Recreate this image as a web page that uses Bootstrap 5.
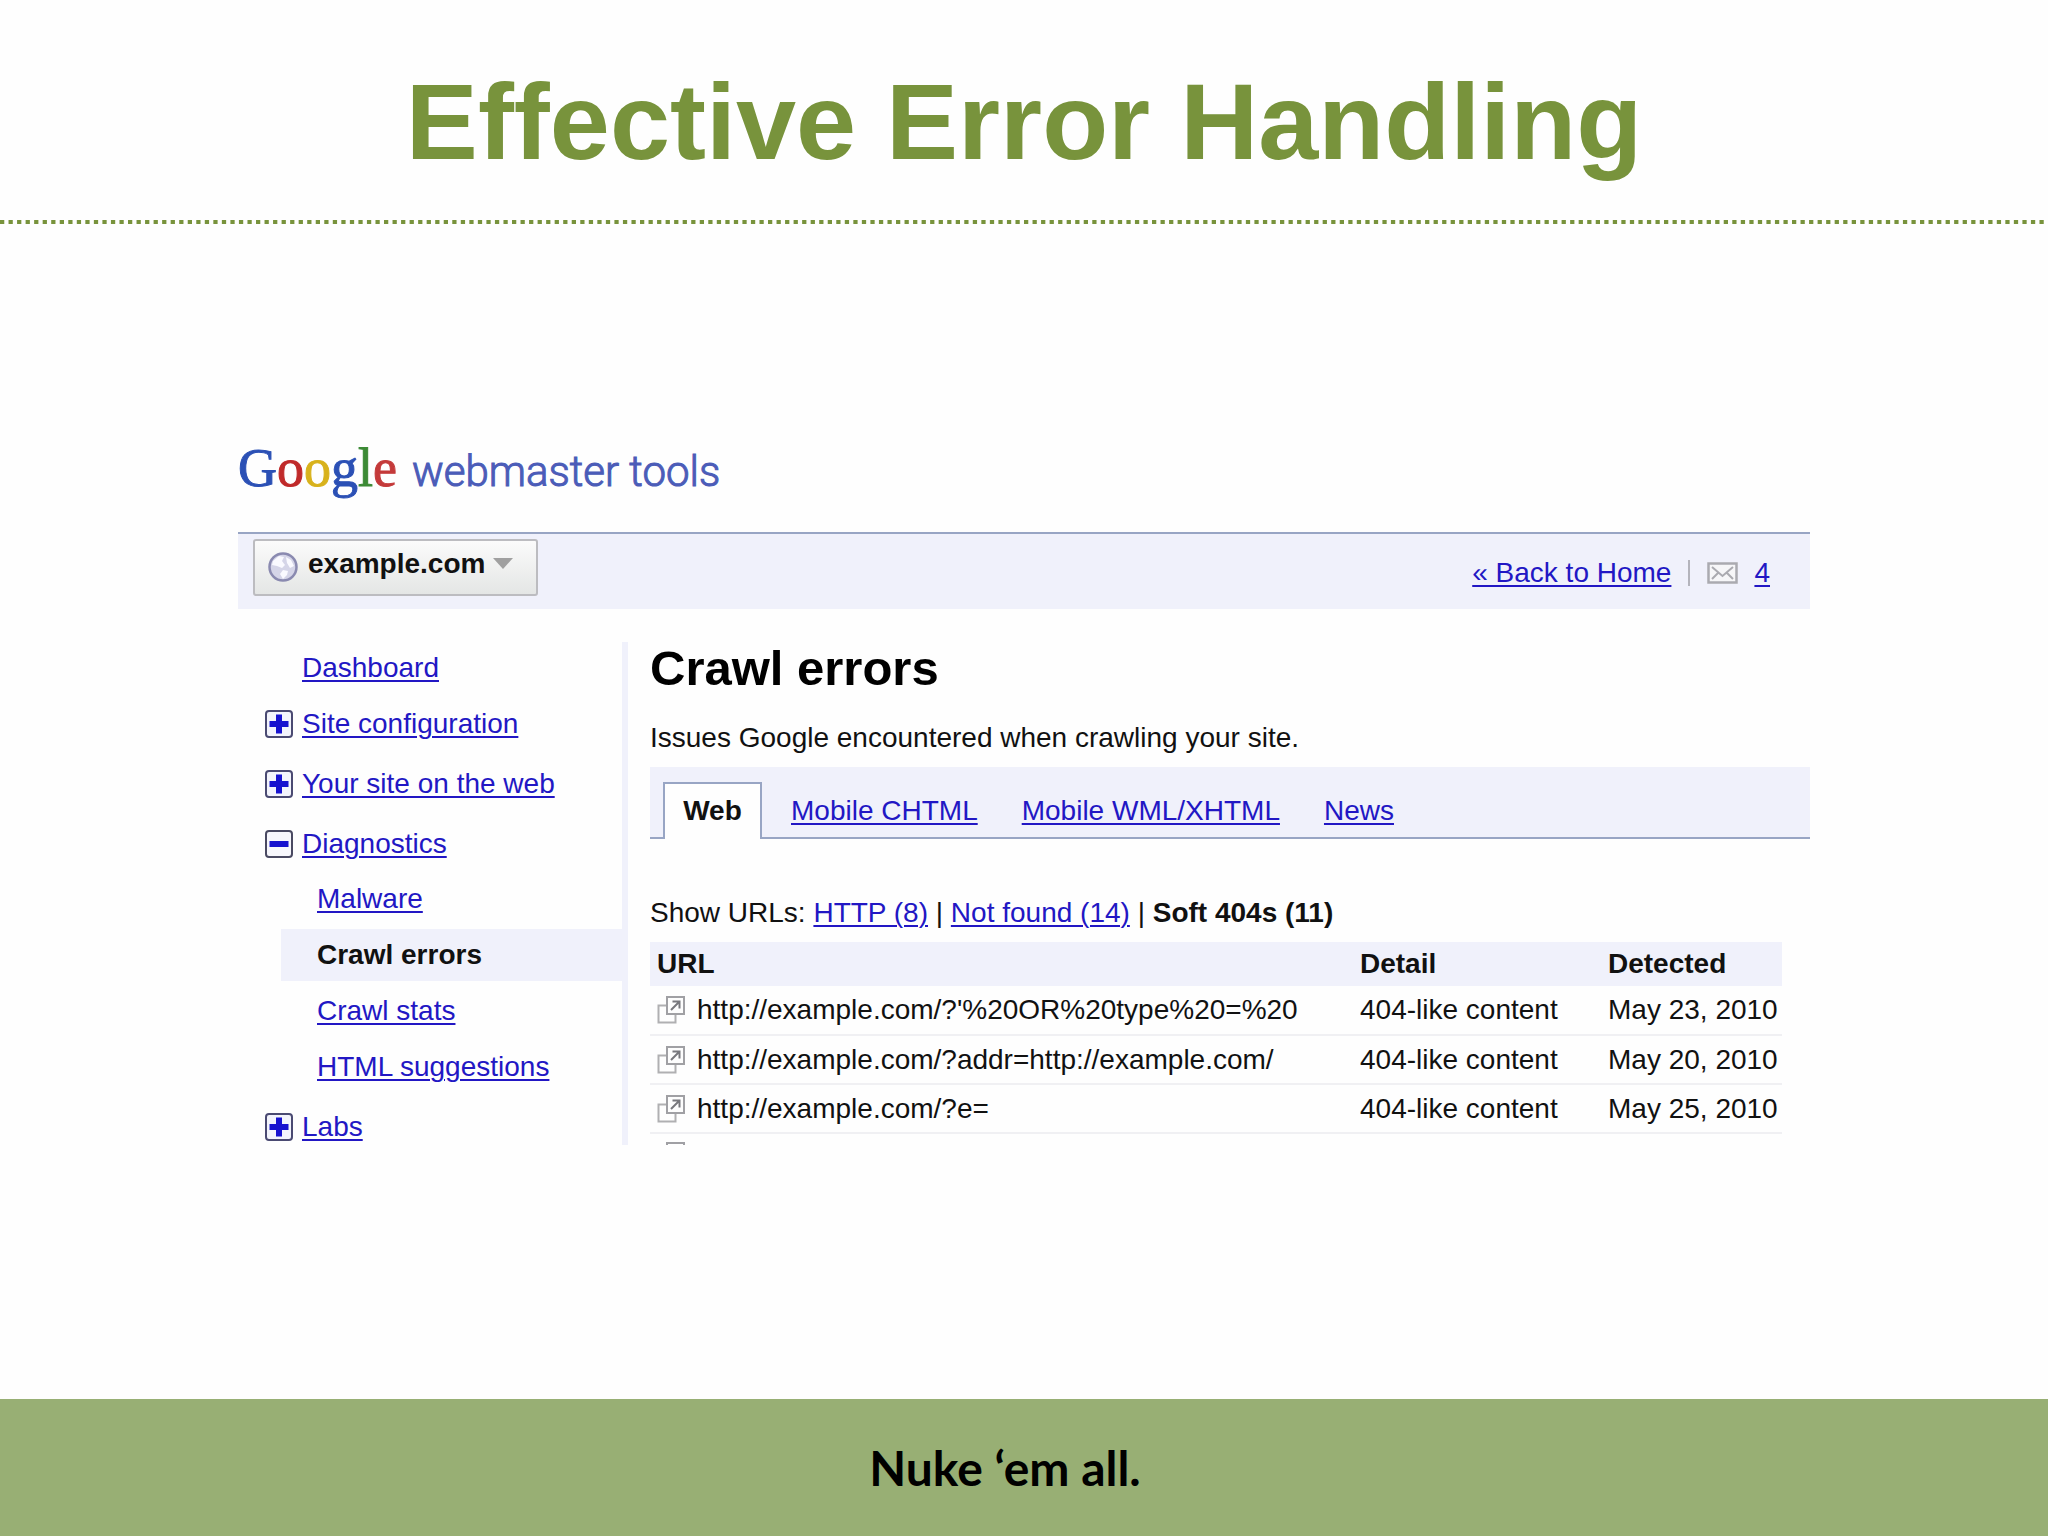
<!DOCTYPE html>
<html lang="en">
<head>
<meta charset="utf-8">
<meta name="viewport" content="width=device-width, initial-scale=1">
<title>Effective Error Handling</title>
<link href="https://cdn.jsdelivr.net/npm/bootstrap@5.3.0/dist/css/bootstrap.min.css" rel="stylesheet">
<style>
  :root { --leaf: #78933c; --panel: #f0f1fb; --rule: #98a5c4; --link: #2217c4; }
  body { font-family: "Liberation Sans", Arial, sans-serif; font-size: 28px; line-height: 34px; color: #111; background: #fefefe; }
  a { color: var(--link); text-decoration-thickness: 2px; text-underline-offset: 3px; }
  .slide-head { height: 220px; padding-top: 24px; }
  .slide-title { font-size: 108px; line-height: 120px; color: var(--leaf); }
  .dots { height: 4px; width: 100%; }
  .slide-body { padding: 214px 24px 0; }
  .tool { max-width: 1572px; }
  .brand { line-height: 60px; margin-bottom: 30px; }
  .brand-g { font-family: "Liberation Serif", serif; font-size: 54px; -webkit-text-stroke: 1px; }
  .brand-name { font-family: Roboto, sans-serif; font-weight: 300; font-size: 42px; color: #4b5cb8; margin-left: 15px; -webkit-text-stroke: 1px; }
  .site-bar { background: var(--panel); border-top: 2px solid var(--rule); height: 77px; padding: 5px 40px 0 15px; margin-bottom: 33px; }
  .site-pick { height: 57px; width: 285px; padding: 0 0 8px 13px; border: 2px solid #bcbcc0; border-radius: 3px; background: linear-gradient(#fbfbfb, #e4e6e5); font-weight: 700; color: #111; text-align: left; }
  .site-pick svg:first-child { margin: 6px 2px 0 0; }
  .bar-links { height: 68px; }
  .bar-sep { width: 2px; height: 26px; background: #b4b4bc; margin: 0 17px; }
  .side { flex: 0 0 390px; border-right: 6px solid var(--panel); padding-left: 27px; }
  .side-row { height: 60px; gap: 9px; }
  .side-first { height: 52px; padding-left: 37px; }
  .side-last { height: 36px; }
  .side-sub { margin: -3px 0 14px 16px; }
  .side-sub li { height: 52px; margin: 2px 0; padding-left: 36px; }
  .side-sub .here { background: var(--panel); font-weight: 700; }
  .twist { width: 28px; height: 28px; padding: 0; border: 0; background: none; }
  .report { padding-left: 22px; min-width: 0; }
  .report h2 { font-size: 49px; line-height: 52px; margin-bottom: 27px; color: #000; }
  .report-note { margin-bottom: 12px; }
  .report-tabs { background: var(--panel); border-bottom: 2px solid var(--rule); height: 72px; padding-left: 13px; margin-bottom: 57px; }
  .report-tabs .nav-link { height: 57px; padding: 0; border-radius: 0; border: 0; text-decoration: underline; color: var(--link); line-height: 57px; margin-bottom: -2px; }
  .report-tabs .nav-link.active { width: 99px; border: 2px solid var(--rule); border-bottom: 0; text-align: center; text-decoration: none; font-weight: 700; color: #111; background: #fefefe; margin-right: 29px; line-height: 53px; }
  .report-tabs .nav-link + .nav-link { margin-right: 44px; }
  .filters { margin-bottom: 12px; }
  .urls { width: calc(100% - 28px); margin: 0; table-layout: fixed; }
  .urls th, .urls td { padding: 0 0 0 7px; vertical-align: middle; white-space: nowrap; }
  .urls th { height: 44px; background: var(--panel); }
  .urls td { height: 49px; border-bottom: 2px solid #f0f0f3; }
  .urls .peek td { height: 12px; border: 0; line-height: 0; vertical-align: bottom; }
  .c-detail { width: 248px; } .c-date { width: 181px; }
  .urls svg { display: block; }
  .url-cell { gap: 12px; }
  .slide-foot { height: 137px; background: #98af74; font-family: Lato, sans-serif; font-weight: 700; font-size: 48px; line-height: 56px; color: #000; padding-right: 38px; padding-top: 1px; }
</style>
</head>
<body class="d-flex flex-column min-vh-100">
<svg class="d-none" aria-hidden="true">
  <symbol id="i-plus" viewBox="0 0 28 28"><rect x="1" y="1" width="26" height="26" rx="3" fill="#f3f4fc" stroke="#4a4a72" stroke-width="2"/><path d="M11 4.500h6v6.500h6.500v6h-6.500v6.500h-6v-6.500H4.500v-6H11z" fill="#1712cf"/></symbol>
  <symbol id="i-minus" viewBox="0 0 28 28"><rect x="1" y="1" width="26" height="26" rx="3" fill="#f7f7fc" stroke="#4a4a62" stroke-width="2"/><path d="M4.500 11h19v6h-19z" fill="#1712cf"/></symbol>
  <symbol id="i-open" viewBox="0 0 28 28"><path d="M9 9.500H1.500v17h17V19" fill="none" stroke="#b0b0b2" stroke-width="2"/><rect x="10" y="1" width="17" height="17" fill="#fdfdfd" stroke="#a0a0a4" stroke-width="2"/><path d="M14 14L22 6M15.500 5.500H22.500V12.500" fill="none" stroke="#77777c" stroke-width="2"/></symbol>
</svg>

<header class="slide-head d-flex align-items-center justify-content-center">
  <h1 class="slide-title fw-bold m-0 text-center">Effective Error Handling</h1>
</header>
<svg class="dots d-block" aria-hidden="true"><line x1="0" y1="2" x2="100%" y2="2" pathLength="480" stroke="#78933c" stroke-width="4" stroke-dasharray="1 1"/></svg>

<main class="slide-body flex-grow-1">
  <div class="tool mx-auto">
    <div class="brand d-flex align-items-baseline">
      <span class="brand-g"><span style="color:#2b50b5">G</span><span style="color:#c02a2a">o</span><span style="color:#d8b21c">o</span><span style="color:#2b50b5">g</span><span style="color:#3c8a35">l</span><span style="color:#c43a3a">e</span></span>
      <span class="brand-name">webmaster tools</span>
    </div>

    <div class="site-bar d-flex justify-content-between">
      <button type="button" class="site-pick d-flex align-items-center">
        <svg width="30" height="30" viewBox="0 0 30 30" aria-hidden="true"><circle cx="15" cy="15" r="13.500" fill="#d5d5e8" stroke="#8a8ab0" stroke-width="2.500"/><path d="M5 9l6-5 5 1-2 4 3 4-3 3-5-2-5-1zM18 5l5 3 3 6-4 2-3-5zM15 18l5 1-1 4-4 4-3-5z" fill="#fafaff"/></svg>
        <span class="ms-2">example.com</span>
        <svg class="ms-2" width="20" height="12" viewBox="0 0 20 12" aria-hidden="true"><path d="M0 0h20L10 11z" fill="#a0a0a0"/></svg>
      </button>
      <div class="bar-links d-flex align-items-center">
        <a href="#">« Back to Home</a>
        <span class="bar-sep"></span>
        <svg width="31" height="22" viewBox="0 0 31 22" aria-hidden="true"><rect x="1.500" y="1.500" width="28" height="19" fill="#f6f6f8" stroke="#aaaab0" stroke-width="2.500"/><path d="M5 5l10.500 9L26 5M5 17l6-6M26 17l-6-6" fill="none" stroke="#aaaab0" stroke-width="2"/></svg>
        <a href="#" class="ms-3">4</a>
      </div>
    </div>

    <div class="d-flex">
      <nav class="side" aria-label="Site">
        <div class="side-first d-flex align-items-center"><a href="#">Dashboard</a></div>
        <div class="side-row d-flex align-items-center"><button class="twist d-flex" type="button" aria-label="Expand"><svg width="28" height="28"><use href="#i-plus"/></svg></button><a href="#">Site configuration</a></div>
        <div class="side-row d-flex align-items-center"><button class="twist d-flex" type="button" aria-label="Expand"><svg width="28" height="28"><use href="#i-plus"/></svg></button><a href="#">Your site on the web</a></div>
        <div class="side-row d-flex align-items-center"><button class="twist d-flex" type="button" aria-label="Collapse"><svg width="28" height="28"><use href="#i-minus"/></svg></button><a href="#">Diagnostics</a></div>
        <ul class="side-sub list-unstyled d-flex flex-column">
          <li class="d-flex align-items-center"><a href="#">Malware</a></li>
          <li class="here d-flex align-items-center">Crawl errors</li>
          <li class="d-flex align-items-center"><a href="#">Crawl stats</a></li>
          <li class="d-flex align-items-center"><a href="#">HTML suggestions</a></li>
        </ul>
        <div class="side-row side-last d-flex align-items-center"><button class="twist d-flex" type="button" aria-label="Expand"><svg width="28" height="28"><use href="#i-plus"/></svg></button><a href="#">Labs</a></div>
      </nav>

      <section class="report flex-grow-1">
        <h2 class="fw-bold">Crawl errors</h2>
        <p class="report-note">Issues Google encountered when crawling your site.</p>
        <nav class="report-tabs nav align-items-end" aria-label="Crawl type">
          <a class="nav-link active" href="#">Web</a>
          <a class="nav-link" href="#">Mobile CHTML</a>
          <a class="nav-link" href="#">Mobile WML/XHTML</a>
          <a class="nav-link" href="#">News</a>
        </nav>
        <p class="filters">Show URLs: <a href="#">HTTP (8)</a> | <a href="#">Not found (14)</a> | <b>Soft 404s (11)</b></p>
        <table class="urls">
          <colgroup><col><col class="c-detail"><col class="c-date"></colgroup>
          <thead><tr><th scope="col">URL</th><th scope="col">Detail</th><th scope="col">Detected</th></tr></thead>
          <tbody>
            <tr><td><div class="url-cell d-flex align-items-center"><svg width="28" height="28"><use href="#i-open"/></svg>http://example.com/?'%20OR%20type%20=%20</div></td><td>404-like content</td><td>May 23, 2010</td></tr>
            <tr><td><div class="url-cell d-flex align-items-center"><svg width="28" height="28"><use href="#i-open"/></svg>http://example.com/?addr=http://example.com/</div></td><td>404-like content</td><td>May 20, 2010</td></tr>
            <tr><td><div class="url-cell d-flex align-items-center"><svg width="28" height="28"><use href="#i-open"/></svg>http://example.com/?e=</div></td><td>404-like content</td><td>May 25, 2010</td></tr>
            <tr class="peek"><td colspan="3"><svg class="ms-0 mt-auto" width="28" height="3" viewBox="0 0 28 3"><path d="M10 3V1h17v2" fill="none" stroke="#a0a0a4" stroke-width="2"/></svg></td></tr>
          </tbody>
        </table>
      </section>
    </div>
  </div>
</main>

<footer class="slide-foot d-flex align-items-center justify-content-center">Nuke ‘em all.</footer>
<script src="https://cdn.jsdelivr.net/npm/bootstrap@5.3.0/dist/js/bootstrap.bundle.min.js"></script>
</body>
</html>
